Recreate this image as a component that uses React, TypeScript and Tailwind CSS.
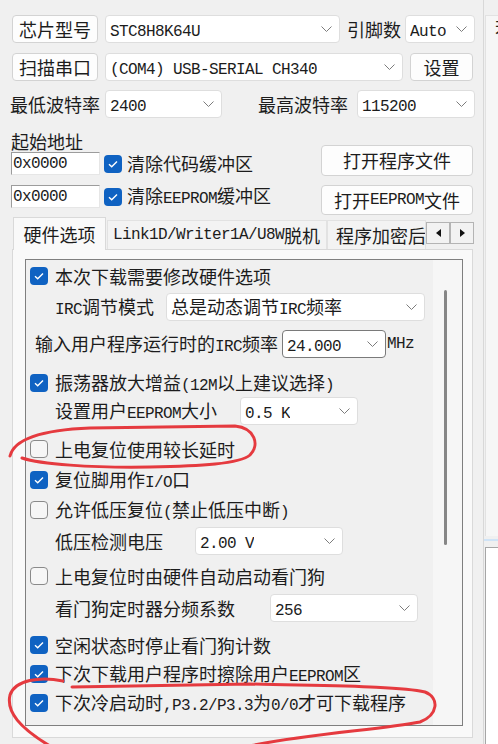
import React from 'react'
import clsx from 'clsx'

// latin runs get the narrow mono face, CJK stays in Noto
const Mix = ({ t }: { t: string }) => {
  const parts = t.split(/([\x20-\x7e]+)/).filter(Boolean)
  return (
    <>
      {parts.map((p, i) =>
        /^[\x20-\x7e]+$/.test(p) ? (
          <span key={i} className="font-['Liberation_Mono',monospace] text-[16px] tracking-[-0.6px]">
            {p}
          </span>
        ) : (
          <span key={i}>{p}</span>
        )
      )}
    </>
  )
}

const Chevron = () => (
  <svg width="11" height="6" viewBox="0 0 11 6" className="shrink-0">
    <path d="M0.5 0.5 L5.5 5.5 L10.5 0.5" fill="none" stroke="#7c7c7c" strokeWidth="1" />
  </svg>
)

const Combo = ({ text, className, dark }: { text: string; className: string; dark?: boolean }) => (
  <div
    className={clsx(
      'flex h-[28px] shrink-0 items-center justify-between rounded-[4px] border bg-white pl-[4px] pr-[7px] whitespace-nowrap',
      dark ? 'border-[#7a7a7a]' : 'border-[#dedede]',
      className
    )}
  >
    <span className="overflow-hidden">
      <Mix t={text} />
    </span>
    <Chevron />
  </div>
)

const Btn = ({ text, className }: { text: string; className: string }) => (
  <div
    className={clsx(
      'flex shrink-0 items-center justify-center rounded-[4px] border border-[#d3d3d3] bg-[#fdfdfd] whitespace-nowrap',
      className
    )}
  >
    <Mix t={text} />
  </div>
)

const Check = ({ on }: { on: boolean }) =>
  on ? (
    <div className="flex h-[18px] w-[18px] shrink-0 items-center justify-center rounded-[4px] bg-[#0f62c2]">
      <svg width="18" height="18" viewBox="0 0 18 18">
        <path d="M5 9.3 L7.7 11.8 L13 6.4" fill="none" stroke="white" strokeWidth="1.4" />
      </svg>
    </div>
  ) : (
    <div className="h-[18px] w-[18px] shrink-0 rounded-[4px] border-[1.5px] border-[#8a8a8a] bg-[#f6f6f6]" />
  )

const CbRow = ({ on, text, className }: { on: boolean; text: string; className: string }) => (
  <div className={clsx('flex h-[28px] items-center whitespace-nowrap', className)}>
    <Check on={on} />
    <span className="ml-[7px]">
      <Mix t={text} />
    </span>
  </div>
)

const Input = ({ text }: { text: string }) => (
  <div className="flex h-[23px] w-[89px] shrink-0 items-center border-t border-l border-r border-b border-t-[#9c9c9c] border-l-[#9c9c9c] border-r-[#e6e6e6] border-b-[#e6e6e6] bg-white pl-[1px]">
    <Mix t={text} />
  </div>
)

const Arrow = ({ left }: { left?: boolean }) => (
  <div className="flex h-[22px] w-[24px] items-center justify-center border border-[#b4b4b4] bg-[#f2f2f2]">
    <svg width="5" height="8" viewBox="0 0 5 8">
      <path d={left ? 'M5 0 L0 4 L5 8 Z' : 'M0 0 L5 4 L0 8 Z'} fill="#111" />
    </svg>
  </div>
)

const HardwarePanel = () => (
  <div className="flex h-[467px] w-[438px] border border-[#7f7f7f] bg-[#f0f0f0]">
    <div className="w-[407px] shrink-0 pl-[4px] pt-[2px]">
      <CbRow on text="本次下载需要修改硬件选项" className="" />
      <div className="mt-[3px] flex h-[28px] items-center">
        <span className="ml-[25px] w-[111px] shrink-0 whitespace-nowrap">
          <Mix t="IRC调节模式" />
        </span>
        <Combo text="总是动态调节IRC频率" className="w-[259px]" />
      </div>
      <div className="mt-[9px] flex h-[28px] items-center">
        <span className="ml-[5px] w-[247px] shrink-0 whitespace-nowrap">
          <Mix t="输入用户程序运行时的IRC频率" />
        </span>
        <Combo text="24.000" dark className="w-[104px]" />
        <span className="ml-[1px] font-['Liberation_Mono',monospace] text-[16px] tracking-[-0.6px]">MHz</span>
      </div>
      <CbRow on text="振荡器放大增益(12M以上建议选择)" className="mt-[11px]" />
      <div className="flex h-[28px] items-center">
        <span className="ml-[25px] w-[185px] shrink-0 whitespace-nowrap">
          <Mix t="设置用户EEPROM大小" />
        </span>
        <Combo text="0.5 K" className="w-[118px]" />
      </div>
      <CbRow on={false} text="上电复位使用较长延时" className="mt-[10px]" />
      <CbRow on text="复位脚用作I/O口" className="mt-[3px]" />
      <CbRow on={false} text="允许低压复位(禁止低压中断)" className="mt-[2px]" />
      <div className="mt-[3px] flex h-[28px] items-center">
        <span className="ml-[25px] w-[140px] shrink-0 whitespace-nowrap">低压检测电压</span>
        <Combo text="2.00 V" className="w-[148px]" />
      </div>
      <CbRow on={false} text="上电复位时由硬件自动启动看门狗" className="mt-[7px]" />
      <div className="mt-[4px] flex h-[28px] items-center">
        <span className="ml-[25px] w-[215px] shrink-0 whitespace-nowrap">看门狗定时器分频系数</span>
        <Combo text="256" className="w-[148px]" />
      </div>
      <CbRow on text="空闲状态时停止看门狗计数" className="mt-[9px]" />
      <CbRow on text="下次下载用户程序时擦除用户EEPROM区" className="mt-[1px]" />
      <CbRow on text="下次冷启动时,P3.2/P3.3为0/0才可下载程序" className="mt-[1px]" />
    </div>
    <div className="flex-1 bg-[#f6f6f6] pl-[11px] pt-[30px]">
      <div className="h-[255px] w-[3px] rounded-full bg-[#868686]" />
    </div>
  </div>
)

export default function App() {
  return (
    <div className="relative flex h-[744px] w-[498px] overflow-hidden bg-[#f0f0f0] font-['Noto_Sans_CJK_SC',sans-serif] text-[18px] text-[#1c1c1c]">
      <div className="w-[483px] shrink-0 pt-[15px]">
        {/* chip / pins */}
        <div className="flex h-[28px] items-center pl-[12px]">
          <Btn text="芯片型号" className="h-[28px] w-[86px]" />
          <Combo text="STC8H8K64U" className="ml-[7px] w-[235px]" />
          <span className="ml-[7px] w-[54px] shrink-0 whitespace-nowrap">引脚数</span>
          <Combo text="Auto" className="ml-[4px] w-[70px]" />
        </div>
        {/* serial port */}
        <div className="mt-[10px] flex h-[28px] items-center pl-[12px]">
          <Btn text="扫描串口" className="h-[28px] w-[86px]" />
          <Combo text="(COM4) USB-SERIAL CH340" className="ml-[7px] w-[298px]" />
          <Btn text="设置" className="ml-[7px] h-[28px] w-[63px]" />
        </div>
        {/* baud */}
        <div className="mt-[9px] flex h-[28px] items-center pl-[10px]">
          <span className="w-[95px] shrink-0 whitespace-nowrap">最低波特率</span>
          <Combo text="2400" className="w-[117px]" />
          <span className="ml-[36px] w-[99px] shrink-0 whitespace-nowrap">最高波特率</span>
          <Combo text="115200" className="w-[118px]" />
        </div>
        {/* start address */}
        <div className="mt-[13px] flex pl-[11px] pr-[10px]">
          <div>
            <div className="h-[21px] leading-[21px]">起始地址</div>
            <div className="flex h-[23px] items-center whitespace-nowrap">
              <Input text="0x0000" />
              <span className="ml-[4px]">
                <Check on />
              </span>
              <span className="ml-[5px]">清除代码缓冲区</span>
            </div>
            <div className="mt-[10px] flex h-[23px] items-center whitespace-nowrap">
              <Input text="0x0000" />
              <span className="ml-[4px]">
                <Check on />
              </span>
              <span className="ml-[5px]">
                <Mix t="清除EEPROM缓冲区" />
              </span>
            </div>
          </div>
          <div className="ml-auto pt-[14px]">
            <Btn text="打开程序文件" className="h-[31px] w-[152px]" />
            <Btn text="打开EEPROM文件" className="mt-[9px] h-[30px] w-[152px]" />
          </div>
        </div>
        {/* tabs */}
        <div className="mt-[2px] flex h-[32px] items-end pl-[13px]">
          <div className="relative z-10 mb-[-1px] flex h-[33px] w-[93px] items-center justify-center border border-b-0 border-[#d9d9d9] bg-[#f9f9f9]">
            硬件选项
          </div>
          <div className="ml-[1px] flex h-[29px] w-[220px] items-center whitespace-nowrap border border-b-0 border-[#e2e2e2] bg-[#f3f3f3] pl-[5px]">
            <Mix t="Link1D/Writer1A/U8W脱机" />
          </div>
          <div className="flex h-[29px] w-[99px] items-center overflow-hidden whitespace-nowrap border border-b-0 border-[#e2e2e2] bg-[#f3f3f3] pl-[8px]">
            程序加密后传输
          </div>
          <div className="mb-[5px] flex">
            <Arrow left />
            <Arrow />
          </div>
        </div>
        <div className="ml-[12px] h-[489px] w-[461px] border border-[#d9d9d9] bg-[#f9f9f9] pl-[12px] pt-[9px]">
          <HardwarePanel />
        </div>
      </div>

      {/* neighbouring pane, mostly cut off */}
      <div className="flex w-[15px] shrink-0 flex-col border-l border-[#d8d8d8] pt-[15px]">
        <div className="ml-[1px] h-[521px] overflow-hidden border-t border-l border-[#e2e2e2] bg-[#f6f6f6]">
          <div className="whitespace-nowrap pl-[9px] text-[18px] leading-[22px]">若</div>
          <div className="ml-[12px] mt-[19px] h-[463px] w-[2px] bg-[#8c8c8c]" />
        </div>
        <div className="mt-[3px] h-[2px] bg-[#cfe3f6]" />
        <div className="ml-[1px] mt-[6px] flex-1 border-l border-t border-[#a6a6a6] bg-white" />
      </div>

      {/* red hand-drawn marks */}
      <svg
        className="pointer-events-none absolute inset-0"
        width="498"
        height="744"
        viewBox="0 0 498 744"
        fill="none"
        stroke="#e53a3f"
        strokeWidth="3"
        strokeLinecap="round"
      >
        <path d="M10 456 C 14 440, 40 430, 90 428 L 235 426 C 255 428, 260 445, 250 455 C 240 464, 200 466, 150 467 C 90 468, 40 464, 22 458" />
        <path d="M63 681 C 40 676, 15 680, 10 695 C 6 712, 20 728, 50 746" />
        <path d="M72 687 L 250 684 C 330 686, 400 686, 425 692 C 440 698, 438 715, 420 722 C 380 730, 300 734, 240 748" />
      </svg>
    </div>
  )
}
